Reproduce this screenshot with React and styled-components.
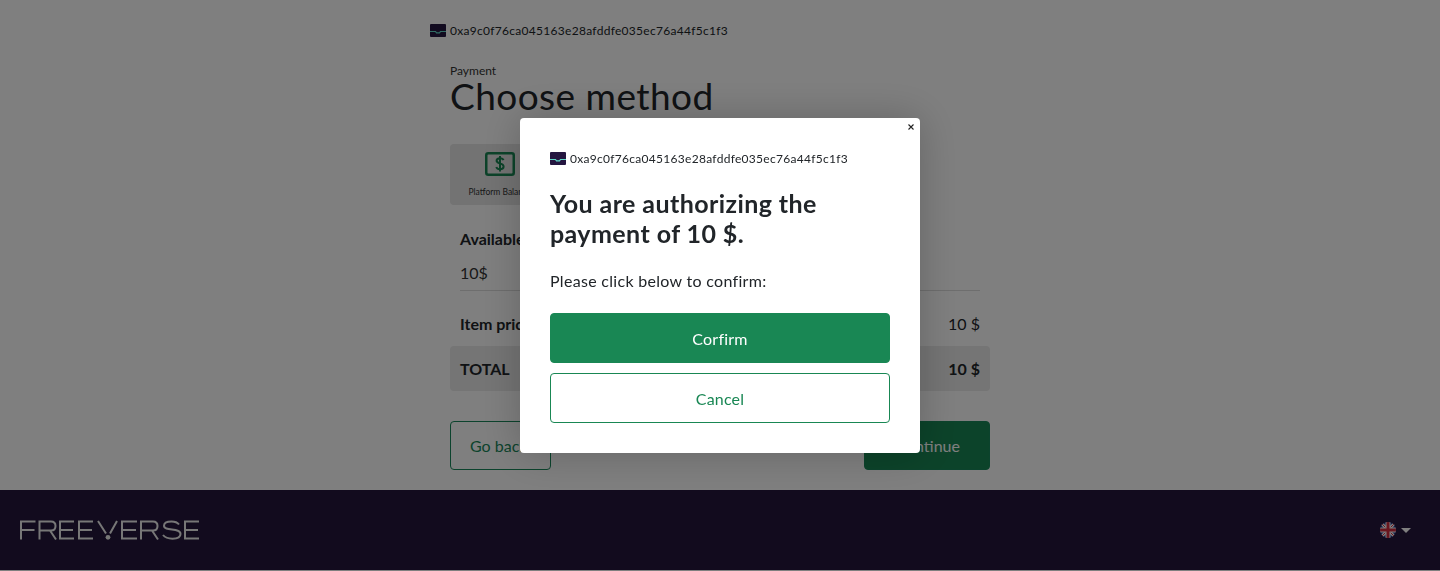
import React from "react";
import styled, { createGlobalStyle } from "styled-components";

const Global = createGlobalStyle`
  html, body { margin: 0; padding: 0; background: #fff; }
  body { font-family: Lato, "Noto Sans", sans-serif; color: #212529; }
  * { box-sizing: border-box; }
`;
const Page = styled.div`display: flex; flex-direction: column; height: 570px; background: #fff;`;
const Main = styled.main`flex: 1; display: flex; flex-direction: column; align-items: center; padding-top: 22px;`;
const Column = styled.div`width: 580px; display: flex; flex-direction: column;`;
const Wallet = styled.div`display: flex; align-items: center; gap: 4px; height: 17px; font-size: 12px; line-height: 17px; letter-spacing: .29px; color: #212529;`;
const Content = styled.div`display: flex; flex-direction: column; padding: 0 20px;`;
const Eyebrow = styled.div`margin-top: 24px; font-size: 12px; line-height: 15px; color: #333;`;
const Title = styled.h1`margin: 0; font-size: 37px; line-height: 36px; font-weight: 400; letter-spacing: .45px; color: #212529;`;
const Tabs = styled.div`display: flex; margin-top: 30px;`;
const Tab = styled.div`width: 100px; height: 61px; border-radius: 4px; background: #e6e6e6; display: flex; flex-direction: column; align-items: center; padding-top: 8px; font-size: 8.5px; color: #333;`;
const TabLabel = styled.span`margin-top: 11px; line-height: 10px; white-space: nowrap;`;
const Section = styled.div`padding: 0 10px; margin-top: 22px;`;
const Label = styled.div`font-size: 16px; line-height: 24px; font-weight: 700;`;
const Field = styled.div`margin-top: 10px; height: 30px; font-size: 16px; line-height: 24px; color: #333; border-bottom: 1px solid #dcdcdc;`;
const PriceRow = styled.div`display: flex; justify-content: space-between; align-items: center; height: 45px; margin-top: 10px; padding: 0 10px; font-size: 16px;`;
const RowLabel = styled.span`font-weight: 700;`;
const TotalRow = styled(PriceRow)`margin-top: 0; background: #eaeaea; border-radius: 4px; font-weight: 700; height: 45px;`;
const Actions = styled.div`display: flex; justify-content: space-between; margin-top: 30px;`;
const PageButton = styled.button`
  width: ${p => p.$w}px; height: 49px; border-radius: 4px; font: 400 16px Lato, sans-serif;
  border: 1px solid #19875a; color: ${p => p.$solid ? "#fff" : "#19875a"};
  background: ${p => p.$solid ? "#198754" : "#fff"};
  ${p => p.$solid && "text-align: right; padding-right: 29px;"}
  ${p => !p.$solid && "text-align: left; padding-left: 19px;"}
`;
const Footer = styled.footer`height: 80px; flex: none; background: #25163c; display: flex; align-items: center; justify-content: space-between; padding: 0 29px 0 19px;`;
const Brand = styled.svg`width: 182px; height: 22px; display: block;`;
const LangPicker = styled.div`display: flex; align-items: center; gap: 5px;`;
const Caret = styled.div`width: 0; height: 0; border-left: 5px solid transparent; border-right: 5px solid transparent; border-top: 5px solid #fff;`;
const Overlay = styled.div`position: fixed; inset: 0; z-index: 10; background: rgba(0,0,0,.5); display: flex; align-items: center; justify-content: center;`;
const Modal = styled.div`position: relative; width: 400px; height: 335px; background: #fff; border-radius: 4px; padding: 32px 30px 30px; box-shadow: 0 0 40px rgba(0,0,0,.22);`;
const Close = styled.button`position: absolute; top: 4px; right: 4px; width: 10px; height: 10px; padding: 0; border: 0; background: none; display: flex;`;
const ModalTitle = styled.h2`margin: 21px 0 0; font-size: 25px; line-height: 30px; font-weight: 700; letter-spacing: .42px; color: #212529;`;
const ModalText = styled.p`margin: 21px 0 0; font-size: 16px; line-height: 24px; letter-spacing: .3px; color: #212529;`;
const ModalButtons = styled.div`display: flex; flex-direction: column; gap: 10px; margin-top: 20px;`;
const ModalButton = styled.button`
  height: 50px; border-radius: 4px; border: 1px solid #198754; font: 400 16px Lato, sans-serif; letter-spacing: .2px;
  background: ${p => p.$solid ? "#198754" : "#fff"}; color: ${p => p.$solid ? "#fff" : "#198754"};
`;

const WalletIcon = () => (
  <svg width="16" height="13" viewBox="0 0 16 13">
    <rect width="16" height="13" rx="1" fill="#241640" />
    <path d="M0 7.5H5.5L6.5 8.8H9.5L10.5 7.5H16" fill="none" stroke="#62d8c8" strokeWidth="1.2" />
  </svg>
);
const DollarIcon = () => (
  <svg width="30" height="24" viewBox="0 0 30 24">
    <rect x="1.25" y="1.25" width="27.5" height="21.5" rx="2" fill="none" stroke="#198754" strokeWidth="2.5" />
    <path d="M18.5 8.2C18 6.8 16.5 6.2 15 6.2C13 6.2 11.6 7.2 11.6 8.8C11.6 12.2 18.6 10.6 18.6 14.4C18.6 16.2 17 17.2 15 17.2C13.2 17.2 11.8 16.4 11.3 15M15 4V19.5" fill="none" stroke="#198754" strokeWidth="2" />
  </svg>
);
const Logo = () => (
  <Brand viewBox="0 0 182 22">
    <g fill="none" stroke="#eee" strokeWidth="2">
      <path d="M2 20.5V2.5H16.5M2 11H15.5" />
      <path d="M20.5 20.5V2.5H32C35 2.5 36.5 4.5 36.5 7S35 11.5 32 11.5H20.5M31 11.5L37 20.5" />
      <path d="M55 2.5H41V19.5H55M41 11H54" />
      <path d="M74 2.5H60V19.5H74M60 11H73" />
      <path d="M79 2L87 14.5M98 2L91 14.5" />
      <path d="M118 2.5H103V19.5H118M103 11H117" />
      <path d="M122 20.5V2.5H134C137 2.5 138.5 4.5 138.5 7S137 11.5 134 11.5H122M133 11.5L139 20.5" />
      <path d="M160 5.5C158.5 3.5 155.5 2.5 152.5 2.5C148.5 2.5 145 3.8 145 6.7C145 12.5 161.5 8.5 161.5 15C161.5 18.3 157.5 19.7 153.5 19.7C149.5 19.7 146 18.5 144 16" />
      <path d="M180 2.5H166V19.5H180M166 11H179" />
    </g>
    <circle cx="89" cy="18.3" r="2.4" fill="#eee" />
  </Brand>
);
const Flag = () => (
  <svg width="16" height="16" viewBox="0 0 16 16">
    <defs><clipPath id="flagClip"><circle cx="8" cy="8" r="8" /></clipPath></defs>
    <g clipPath="url(#flagClip)">
      <rect width="16" height="16" fill="#2a3f8f" />
      <path d="M0 0L16 16M16 0L0 16" stroke="#fff" strokeWidth="3" />
      <path d="M0 0L16 16M16 0L0 16" stroke="#d22a3c" strokeWidth="1" />
      <path d="M8 0V16M0 8H16" stroke="#fff" strokeWidth="5" />
      <path d="M8 0V16M0 8H16" stroke="#d22a3c" strokeWidth="3" />
    </g>
  </svg>
);
const address = "0xa9c0f76ca045163e28afddfe035ec76a44f5c1f3";

export default function App() {
  return (
    <>
      <Global />
      <Page>
        <Main>
          <Column>
            <Wallet><WalletIcon />{address}</Wallet>
            <Content>
              <Eyebrow>Payment</Eyebrow>
              <Title>Choose method</Title>
              <Tabs><Tab><DollarIcon /><TabLabel>Platform Balance</TabLabel></Tab></Tabs>
              <Section>
                <Label>Available balance</Label>
                <Field>10$</Field>
              </Section>
              <PriceRow><RowLabel>Item price</RowLabel><span>10 $</span></PriceRow>
              <TotalRow><span>TOTAL</span><span>10 $</span></TotalRow>
              <Actions>
                <PageButton $w={101}>Go back</PageButton>
                <PageButton $w={126} $solid>Continue</PageButton>
              </Actions>
            </Content>
          </Column>
        </Main>
        <Footer>
          <Logo />
          <LangPicker><Flag /><Caret /></LangPicker>
        </Footer>
      </Page>
      <Overlay>
        <Modal>
          <Close aria-label="Close">
            <svg width="10" height="10" viewBox="0 0 10 10"><path d="M2.5 2.5L7.5 7.5M7.5 2.5L2.5 7.5" stroke="#222" strokeWidth="1.1" /></svg>
          </Close>
          <Wallet><WalletIcon />{address}</Wallet>
          <ModalTitle>You are authorizing the payment of 10 $.</ModalTitle>
          <ModalText>Please click below to confirm:</ModalText>
          <ModalButtons>
            <ModalButton $solid>Corfirm</ModalButton>
            <ModalButton>Cancel</ModalButton>
          </ModalButtons>
        </Modal>
      </Overlay>
    </>
  );
}
